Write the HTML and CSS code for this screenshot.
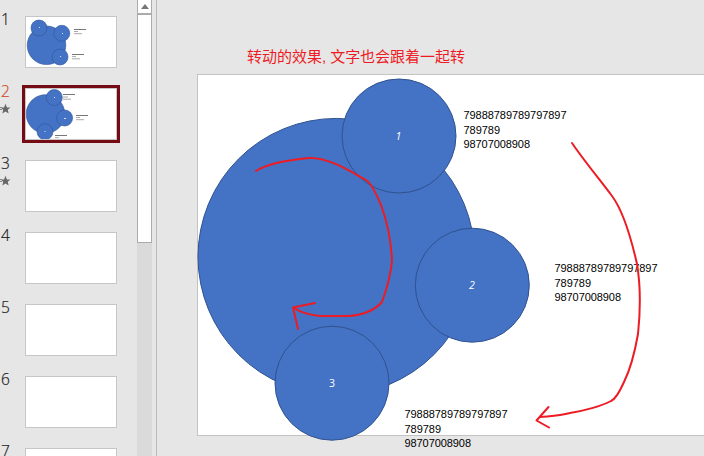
FILE: index.html
```
<!DOCTYPE html>
<html lang="zh-CN">
<head>
<meta charset="utf-8">
<title>Slides</title>
<link rel="stylesheet" href="styles.css">
</head>
<body>
<svg class="defs" width="0" height="0" aria-hidden="true">
  <symbol id="star" viewBox="0 0 12 12">
    <path d="M5.5 .8 6.9 4.4 10.5 4.6 7.7 6.8 8.7 10.6 5.5 8.5 2.3 10.6 3.3 6.8.5 4.6 4.1 4.4Z" fill="#666"/>
    <path d="M0 4.5H2M0 6.5H2" stroke="#888"/>
  </symbol>
</svg>
<div class="app">
  <aside class="panel">
    <div class="item">
      <div class="label"><span class="num">1</span></div>
      <div class="thumb">
        <svg width="90" height="50" viewBox="26 17 90 50">
          <g class="mini"><circle cx="46.5" cy="45.3" r="19.3"/><circle cx="39" cy="28" r="8"/><circle cx="61.8" cy="33.3" r="8"/><circle cx="60" cy="57" r="8"/></g>
          <path class="dots" d="M39 27.5h1M62 33.5h1M60 56.5h1"/>
          <path class="dark" d="M74 29.5h12M72 54.5h12"/>
          <path class="pale" d="M74 31.5h4M74 33.7h8M72 56.6h4M72 58.8h8"/>
        </svg>
      </div>
    </div>
    <div class="item selected">
      <div class="label"><span class="num">2</span><svg class="star" width="12" height="12"><use href="#star"/></svg></div>
      <div class="thumb">
        <svg width="90" height="50" viewBox="26 89 90 50">
          <g class="mini"><circle cx="45.5" cy="114" r="19.3"/><circle cx="54.3" cy="97.5" r="8"/><circle cx="64.6" cy="118" r="8"/><circle cx="45" cy="131.7" r="8"/></g>
          <path class="dots" d="M54 97.5h1M64 118.5h2M44.5 131.5h1"/>
          <path class="dark" d="M63 94.5h12M76 115.5h12M55 135.5h12"/>
          <path class="pale" d="M63 97h5M63 99.2h8M76 117.5h4M76 119.7h8M55 137.7h4"/>
        </svg>
      </div>
    </div>
    <div class="item">
      <div class="label"><span class="num">3</span><svg class="star" width="12" height="12"><use href="#star"/></svg></div>
      <div class="thumb"></div>
    </div>
    <div class="item"><div class="label"><span class="num">4</span></div><div class="thumb"></div></div>
    <div class="item"><div class="label"><span class="num">5</span></div><div class="thumb"></div></div>
    <div class="item"><div class="label"><span class="num">6</span></div><div class="thumb"></div></div>
    <div class="item"><div class="label"><span class="num">7</span></div><div class="thumb"></div></div>
  </aside>
  <div class="scrollbar">
    <div class="up"><svg width="8" height="5"><path d="M0 5 4 0 8 5Z" fill="#777"/></svg></div>
    <div class="handle"></div>
  </div>
  <main class="stage">
    <svg width="547" height="456" viewBox="157 0 547 456">
      <rect class="slide" x="197.5" y="74.5" width="640" height="361"/>
      <g class="shapes">
        <circle cx="336.3" cy="256.7" r="138.3"/>
        <circle cx="399" cy="136" r="57"/>
        <circle cx="472.3" cy="285.2" r="57"/>
        <circle cx="332" cy="383.2" r="57"/>
      </g>
      <g class="index">
        <text class="italic" x="398.5" y="140">1</text>
        <text class="italic" x="472" y="289">2</text>
        <text x="332" y="387">3</text>
      </g>
      <g class="data">
        <text x="463.5" y="119" textLength="103">79888789789797897</text>
        <text x="463.5" y="134" textLength="36.500">789789</text>
        <text x="463.5" y="148" textLength="66.500">98707008908</text>
        <text x="554.5" y="272" textLength="103">79888789789797897</text>
        <text x="554.5" y="287" textLength="36.500">789789</text>
        <text x="554.5" y="301" textLength="66.500">98707008908</text>
        <text x="404.5" y="418" textLength="103">79888789789797897</text>
        <text x="404.5" y="433" textLength="36.500">789789</text>
        <text x="404.5" y="447" textLength="66.500">98707008908</text>
      </g>
      <text class="note" x="247" y="62" textLength="218">转动的效果, 文字也会跟着一起转</text>
      <g class="ink">
        <path d="M256 171C267 164 288 160 309 158C328 157 350 171 366 180C371 183 376 193 381 205C387 221 391 241 392 260C391 275 386 291 382 302C374 311 361 315 349 316H320C309 315 300 312 294 308"/>
        <path d="M315 303 293 307.500 298 329"/>
        <path d="M572 143C582 158 600 180 612 196C624 212 632 242 637 264C641 288 640 315 638 334C635 351 630 370 624 382C620 391 616 399 611 401C602 406 583 411 570 413C559 416 550 416 540 417"/>
        <path d="M548.500 407 536.500 420.500 549 427.500"/>
      </g>
    </svg>
  </main>
</div>
</body>
</html>
```

FILE: styles.css
```
* { box-sizing: border-box; }
body { margin: 0; overflow: hidden; background: #e6e6e6; }
svg { display: block; }
.defs { position: absolute; }
.app { display: flex; width: 704px; height: 456px; overflow: hidden; }

.panel { width: 137px; height: 456px; padding-top: 16px; overflow: hidden; display: flex; flex-direction: column; gap: 20px; }
.item { display: flex; flex: none; height: 52px; }
.label { width: 25px; display: flex; flex-direction: column; }
.num { height: 16px; margin-top: -5px; padding-left: 1px; font: 300 15.5px/16px "Open Sans", "Noto Sans", sans-serif; color: #222; -webkit-text-stroke: .2px currentColor; }
.star { margin-top: 4px; }
.thumb { width: 92px; height: 52px; background: #fff; border: 1px solid #c6c6c6; }
.selected .num { color: #d24726; }
.selected .thumb { outline: 3px solid #750b14; }

.mini circle { fill: #4472c4; stroke: #2f5597; stroke-width: .6; }
.dots { stroke: #d5e2f8; }
.dark { stroke: #777; }
.pale { stroke: #aaa; }

.scrollbar { width: 15px; height: 456px; background: #dadada; display: flex; flex-direction: column; }
.up { height: 14px; background: #fff; border: 1px solid #ababab; border-top: 0; display: flex; align-items: center; justify-content: center; }
.handle { height: 229px; background: #fff; border: 1px solid #ababab; }

.stage { width: 548px; margin-left: 4px; border-left: 1px solid #bcbcbc; overflow: hidden; }
.slide { fill: #fff; stroke: #c3c3c3; }
.shapes circle { fill: #4472c4; stroke: #2f528f; stroke-width: 1; }
.index text { font: 10.5px "Open Sans", "Noto Sans", sans-serif; fill: #fff; text-anchor: middle; }
.index .italic { font-style: italic; }
.data text { font: 11px "Liberation Sans", Arial, sans-serif; fill: #000; }
.note { font: 15px "Liberation Sans", "Noto Sans CJK SC", sans-serif; fill: #ed1c24; }
.ink path { fill: none; stroke: #ed1c24; stroke-width: 2; stroke-linecap: round; stroke-linejoin: round; }
```
